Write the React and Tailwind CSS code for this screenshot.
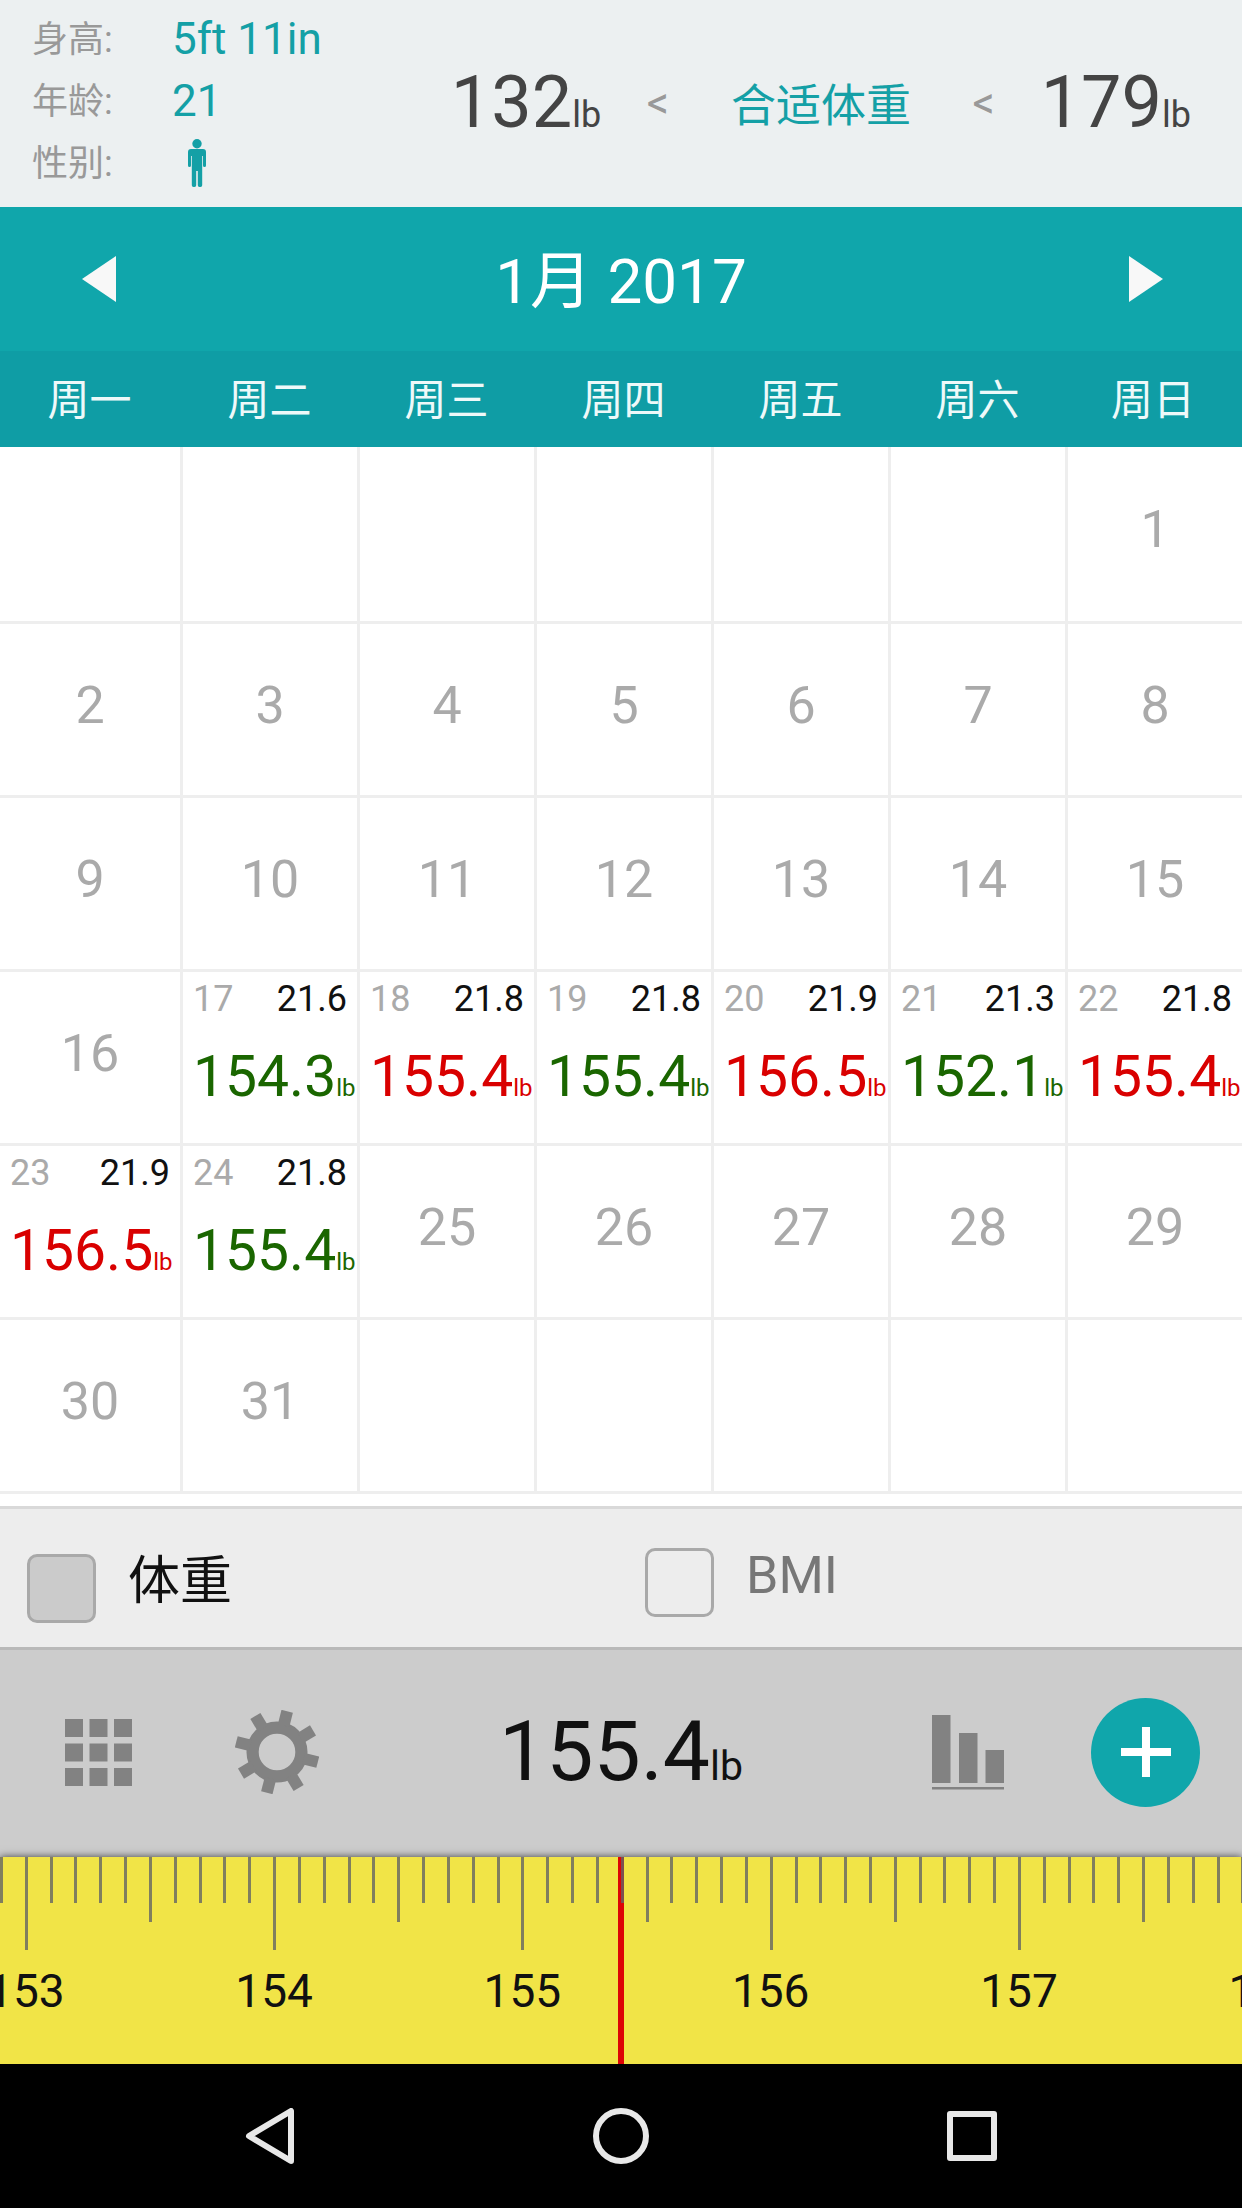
import { useState } from 'react';
import clsx from 'clsx';

const WEEKDAYS = ['周一', '周二', '周三', '周四', '周五', '周六', '周日'];
const FIRST_DAY_OFFSET = 6;
const DAYS_IN_MONTH = 31;
const COLUMNS = 'grid grid-cols-[183fr_repeat(5,177fr)_174fr]';

const RECORDS = {
  17: { bmi: '21.6', weight: '154.3', trend: 'down' },
  18: { bmi: '21.8', weight: '155.4', trend: 'up' },
  19: { bmi: '21.8', weight: '155.4', trend: 'down' },
  20: { bmi: '21.9', weight: '156.5', trend: 'up' },
  21: { bmi: '21.3', weight: '152.1', trend: 'down' },
  22: { bmi: '21.8', weight: '155.4', trend: 'up' },
  23: { bmi: '21.9', weight: '156.5', trend: 'up' },
  24: { bmi: '21.8', weight: '155.4', trend: 'down' },
};

const WEEKS = Array.from({ length: 6 }, (_, week) =>
  Array.from({ length: 7 }, (_, i) => {
    const day = week * 7 + i + 1 - FIRST_DAY_OFFSET;
    return day >= 1 && day <= DAYS_IN_MONTH ? day : null;
  })
);

function ProfileHeader() {
  const term = 'text-[36px] leading-[64px] text-[#999]';

  return (
    <header className="flex bg-[#ecf0f1] pt-2 pb-[13px]">
      <dl className="grid auto-rows-[62px] grid-cols-[140px_auto] pl-8 text-[44px] leading-[62px] text-[#14a0a6]">
        <dt className={term}>身高:</dt>
        <dd>5ft 11in</dd>
        <dt className={term}>年龄:</dt>
        <dd>21</dd>
        <dt className={term}>性别:</dt>
        <dd className="flex items-center pl-4">
          <svg role="img" aria-label="男" viewBox="0 0 18 48" className="h-12 w-[18px] fill-current">
            <circle cx="9" cy="4.8" r="4.7" />
            <path d="M3 10h12a3 3 0 0 1 3 3v13.5a1.5 1.5 0 0 1-3 0V17h-.8v29.3a1.7 1.7 0 0 1-1.7 1.7h-1a1.7 1.7 0 0 1-1.7-1.7V32H8.2v14.3a1.7 1.7 0 0 1-1.7 1.7h-1a1.7 1.7 0 0 1-1.7-1.7V17H3v9.5a1.5 1.5 0 0 1-3 0V13a3 3 0 0 1 3-3z" />
          </svg>
        </dd>
      </dl>
      <div className="flex flex-1 items-center justify-between pt-1 pr-[51px] pl-[129px] text-[44px] whitespace-nowrap text-[#999]">
        <span className="text-[72px] text-[#444]">
          132<span className="text-[36px]">lb</span>
        </span>
        <span>&lt;</span>
        <span className="px-4 pt-1.5 text-[45px] text-[#14a0a6]">合适体重</span>
        <span>&lt;</span>
        <span className="text-[72px] text-[#444]">
          179<span className="text-[36px]">lb</span>
        </span>
      </div>
    </header>
  );
}

function DayCell({ day }) {
  const record = RECORDS[day];
  const cell = 'min-w-0 border-b-[3px] border-[#eee] not-last:border-r-[3px]';

  if (!record) {
    return (
      <td className={clsx(cell, 'flex items-center justify-center pb-2 text-[52px] text-[#aaa]')}>{day}</td>
    );
  }

  return (
    <td className={clsx(cell, 'px-2.5 pt-1.5 whitespace-nowrap')}>
      <div className="flex justify-between text-[36px] leading-[42px]">
        <span className="text-[#aaa]">{day}</span>
        <span className="text-[#111]">{record.bmi}</span>
      </div>
      <div
        className={clsx(
          'mt-6 text-[57px] leading-[66px]',
          record.trend === 'up' ? 'text-[#d90000]' : 'text-[#1a6600]'
        )}
      >
        {record.weight}
        <span className="text-[24px]">lb</span>
      </div>
    </td>
  );
}

function Calendar() {
  return (
    <section className="bg-white pb-3">
      <div className="flex h-36 items-center justify-between bg-[#10a6ab] px-[79px] text-[#f8f8f8]">
        <button type="button" aria-label="上个月">
          <svg viewBox="0 0 40 48" className="h-12 w-10 fill-current">
            <path d="M37 1v46L3 24z" />
          </svg>
        </button>
        <h1 className="pt-1.5 text-[62px] text-white">1月 2017</h1>
        <button type="button" aria-label="下个月">
          <svg viewBox="0 0 40 48" className="h-12 w-10 fill-current">
            <path d="M6 1v46l34-23z" />
          </svg>
        </button>
      </div>
      <table className="block">
        <thead className="block bg-[#0f9da5]">
          <tr className={COLUMNS}>
            {WEEKDAYS.map((name) => (
              <th
                key={name}
                scope="col"
                className="h-24 pr-1 text-[42px] leading-[99px] font-normal text-[#eef9f9]"
              >
                {name}
              </th>
            ))}
          </tr>
        </thead>
        <tbody className="block">
          {WEEKS.map((week, i) => (
            <tr key={i} className={clsx(COLUMNS, i === 0 ? 'h-[177px]' : 'h-[174px]')}>
              {week.map((day, j) => (
                <DayCell key={j} day={day} />
              ))}
            </tr>
          ))}
        </tbody>
      </table>
    </section>
  );
}

function MetricSwitch() {
  const [metric, setMetric] = useState('weight');
  const box =
    'size-[69px] shrink-0 appearance-none rounded-[10px] border-[3px] border-[#a9a9a9] checked:bg-[#cbcbcb]';

  return (
    <div className="grid h-[141px] grid-cols-2 border-t-[3px] border-[#d9d9d9] bg-[#ededed] text-[52px] leading-[56px]">
      <label className="flex items-start gap-8 pt-[45px] pl-[27px] text-[#111]">
        <input type="checkbox" checked={metric === 'weight'} onChange={() => setMetric('weight')} className={box} />
        体重
      </label>
      <label className="flex items-start gap-8 pt-[39px] pl-6 text-[#777]">
        <input type="checkbox" checked={metric === 'bmi'} onChange={() => setMetric('bmi')} className={box} />
        BMI
      </label>
    </div>
  );
}

function Toolbar({ weight }) {
  return (
    <div className="grid h-[210px] grid-cols-[1fr_auto_1fr] items-center border-t-[3px] border-[#b9b9b9] bg-[#ccc] pb-[3px] text-[#828282]">
      <div className="flex items-center gap-[103px] pl-[65px]">
        <button type="button" aria-label="菜单">
          <svg viewBox="0 0 67 67" className="size-[67px] fill-current">
            {[0, 24.5, 49].map((y) => [0, 24.5, 49].map((x) => <rect key={`${x}-${y}`} x={x} y={y} width="18" height="18" />))}
          </svg>
        </button>
        <button type="button" aria-label="设置">
          <svg viewBox="-43 -43 86 86" className="size-[84px] fill-current">
            <circle r="25" fill="none" stroke="currentColor" strokeWidth="12.5" />
            {[14, 59, 104, 149, 194, 239, 284, 329].map((angle) => (
              <rect key={angle} x="-6" y="-43" width="12" height="15" transform={`rotate(${angle})`} />
            ))}
          </svg>
        </button>
      </div>
      <output className="text-[84px] text-[#111]">
        {weight.toFixed(1)}
        <span className="text-[41px]">lb</span>
      </output>
      <div className="flex items-center justify-end gap-[87px] pr-[42px]">
        <button type="button" aria-label="图表">
          <svg viewBox="0 0 72 75" className="h-[75px] w-[72px] fill-current">
            <path d="M0 0h18.5v68H0zM27 18h18.5v50H27zM53.5 35H72v33H53.5zM0 72h72v2.5H0z" />
          </svg>
        </button>
        <button
          type="button"
          aria-label="添加"
          className="flex size-[109px] items-center justify-center rounded-full bg-[#10a6ab] text-white"
        >
          <svg viewBox="0 0 50 50" className="size-[50px] fill-current">
            <path d="M21 0h8v21h21v8H29v21h-8V29H0v-8h21z" />
          </svg>
        </button>
      </div>
    </div>
  );
}

function Ruler({ value, onChange }) {
  // 50 ticks span the screen, the selected value sits on the 26th
  const first = Math.round(value * 10) - 25;
  const ticks = Array.from({ length: 54 }, (_, i) => first + i);

  return (
    <div className="relative h-[207px] bg-[#f1e447] shadow-[0_0_8px_rgba(0,0,0,0.7)]">
      <div className="absolute inset-y-0 left-1/2 w-1.5 -translate-x-1/2 bg-[#dd0505]" />
      <div className="relative flex h-full overflow-hidden">
        {ticks.map((tick) => {
          const whole = tick % 10 === 0;
          return (
            <div key={tick} className="w-[2%] shrink-0">
              <div className="h-[93px]">
                <div
                  className={clsx(
                    'w-[3px] bg-[#646464]/80',
                    whole ? 'h-[93px]' : tick % 5 === 0 ? 'h-[65px]' : 'h-[46px]'
                  )}
                />
              </div>
              {whole && (
                <div className="flex w-0.5 justify-center pt-3.5 text-[46px] leading-[54px] text-[#111]">
                  {tick / 10}
                </div>
              )}
            </div>
          );
        })}
      </div>
      <input
        type="range"
        aria-label="体重"
        min="60"
        max="400"
        step="0.1"
        value={value}
        onChange={(e) => onChange(Number(e.target.value))}
        className="absolute inset-0 h-full w-full opacity-0"
      />
    </div>
  );
}

function SystemNav() {
  const icon = 'size-14 fill-none stroke-[#e8e8e8] stroke-6';

  return (
    <nav className="flex h-36 items-center justify-between bg-black px-[242px]">
      <button type="button" aria-label="返回">
        <svg viewBox="0 0 56 56" className={icon} strokeLinejoin="round">
          <path d="M49 3v50L7 28z" />
        </svg>
      </button>
      <button type="button" aria-label="主屏幕">
        <svg viewBox="0 0 56 56" className={icon}>
          <circle cx="28" cy="28" r="25" />
        </svg>
      </button>
      <button type="button" aria-label="最近任务">
        <svg viewBox="0 0 56 56" className={icon} strokeLinejoin="round">
          <rect x="6" y="6" width="44" height="44" />
        </svg>
      </button>
    </nav>
  );
}

export default function App() {
  const [weight, setWeight] = useState(155.4);

  return (
    <main className="font-['Roboto','Noto_Sans_CJK_SC',sans-serif] leading-none">
      <ProfileHeader />
      <Calendar />
      <MetricSwitch />
      <Toolbar weight={weight} />
      <Ruler value={weight} onChange={setWeight} />
      <SystemNav />
    </main>
  );
}
